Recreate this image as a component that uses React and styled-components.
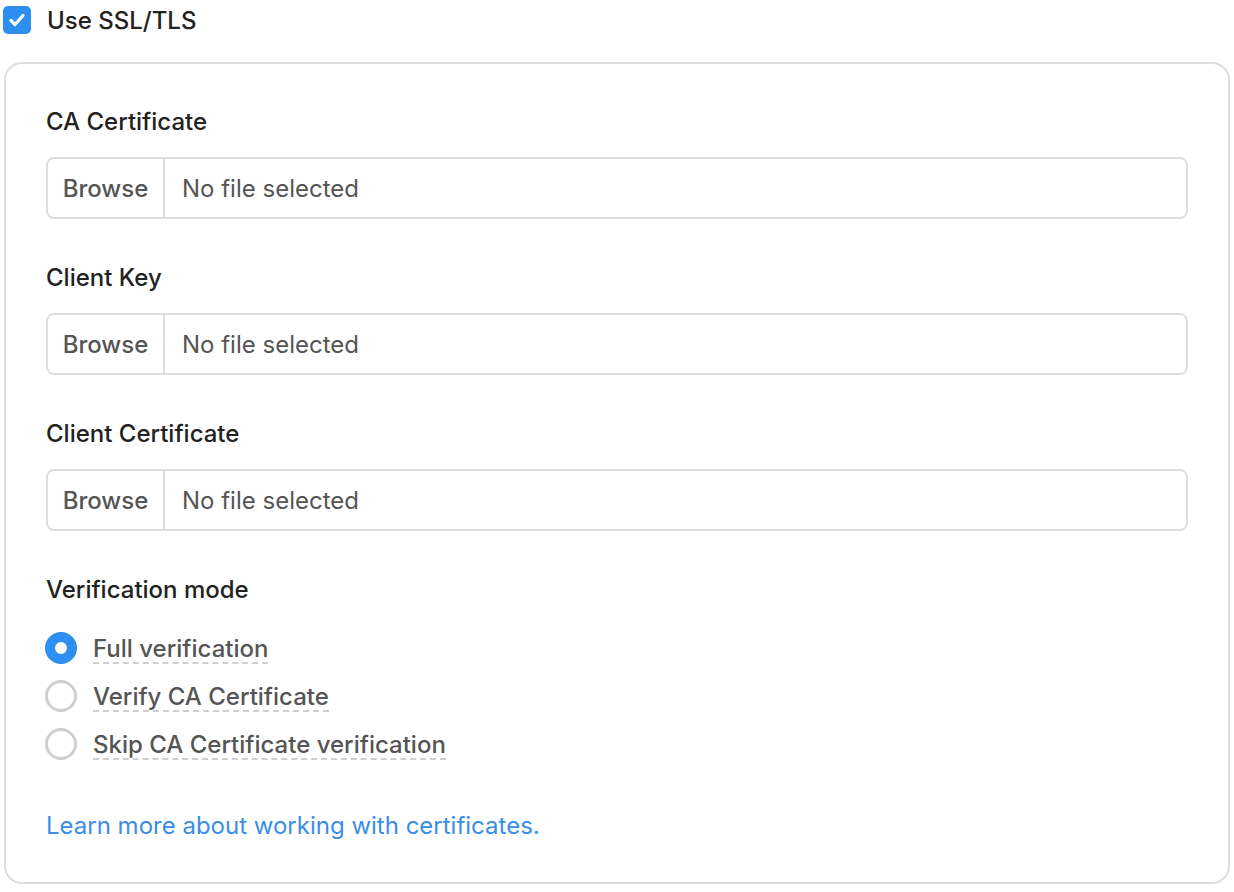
import React, { useState } from "react";
import styled, { createGlobalStyle } from "styled-components";

const Global = createGlobalStyle`
  html, body {
    margin: 0;
    padding: 0;
    background: #fff;
    font-family: Inter, "Noto Sans", "Liberation Sans", sans-serif;
    -webkit-font-smoothing: antialiased;
  }
`;

const Page = styled.div`
  padding: 6px 5px 0 4px;
  width: 1226px;
`;

const CheckRow = styled.label`
  display: flex;
  align-items: center;
  gap: 16px;
  height: 28px;
  margin-left: -1px;
  margin-bottom: 28px;
  font-size: 24px;
  font-weight: 500;
  color: #222;
  cursor: pointer;
`;

const CheckBox = styled.span`
  width: 28px;
  height: 28px;
  border-radius: 5px;
  background: #2d8ff0;
  display: flex;
  align-items: center;
  justify-content: center;
`;

const Card = styled.div`
  border: 2px solid #dedede;
  border-radius: 18px;
  padding: 42px 40px 41px 40px;
  display: flex;
  flex-direction: column;
`;

const Field = styled.div`
  display: flex;
  flex-direction: column;
  gap: 20px;
  margin-bottom: 43px;
`;

const Label = styled.div`
  font-size: 24px;
  line-height: 30px;
  padding-top: 1px;
  font-weight: 500;
  color: #222;
`;

const FileInput = styled.div`
  display: flex;
  height: 62px;
  box-sizing: border-box;
  border: 2px solid #dedede;
  border-radius: 8px;
  width: 1142px;
  font-size: 24px;
  color: #555;
`;

const BrowseBtn = styled.div`
  width: 117px;
  box-sizing: border-box;
  border-right: 2px solid #dedede;
  display: flex;
  align-items: center;
  justify-content: center;
  font-weight: 500;
  color: #555;
`;

const FileName = styled.div`
  display: flex;
  align-items: center;
  padding-left: 17px;
`;

const RadioGroup = styled.div`
  display: flex;
  flex-direction: column;
  margin-top: 19px;
  margin-bottom: 43px;
`;

const RadioRow = styled.label`
  display: flex;
  align-items: center;
  gap: 16px;
  height: 48px;
  cursor: pointer;
`;

const RadioDot = styled.span`
  width: 32px;
  height: 32px;
  box-sizing: border-box;
  border-radius: 50%;
  margin-left: -1px;
  border: ${({ checked }) => (checked ? "10px solid #2d8ff0" : "3px solid #cfcfcf")};
  background: #fff;
`;

const RadioText = styled.span`
  font-size: 24px;
  line-height: 26px;
  font-weight: 500;
  color: #555;
  border-bottom: 2px dashed #cfcfcf;
  margin-top: 4px;
`;

const LearnLink = styled.a`
  font-size: 24px;
  line-height: 30px;
  color: #3a8ee6;
  text-decoration: none;
  align-self: flex-start;
`;

const files = ["CA Certificate", "Client Key", "Client Certificate"];
const modes = ["Full verification", "Verify CA Certificate", "Skip CA Certificate verification"];

export default function App() {
  const [mode, setMode] = useState(0);
  return (
    <Page>
      <Global />
      <CheckRow>
        <CheckBox>
          <svg width="20" height="20" viewBox="0 0 20 20" fill="none">
            <path d="M4 10.5l4 4 8-9" stroke="#fff" strokeWidth="3.2" strokeLinecap="round" strokeLinejoin="round" />
          </svg>
        </CheckBox>
        Use SSL/TLS
      </CheckRow>
      <Card>
        {files.map((f) => (
          <Field key={f}>
            <Label>{f}</Label>
            <FileInput>
              <BrowseBtn>Browse</BrowseBtn>
              <FileName>No file selected</FileName>
            </FileInput>
          </Field>
        ))}
        <Label>Verification mode</Label>
        <RadioGroup>
          {modes.map((m, i) => (
            <RadioRow key={m} onClick={() => setMode(i)}>
              <RadioDot checked={mode === i} />
              <RadioText>{m}</RadioText>
            </RadioRow>
          ))}
        </RadioGroup>
        <LearnLink href="#">Learn more about working with certificates.</LearnLink>
      </Card>
    </Page>
  );
}
